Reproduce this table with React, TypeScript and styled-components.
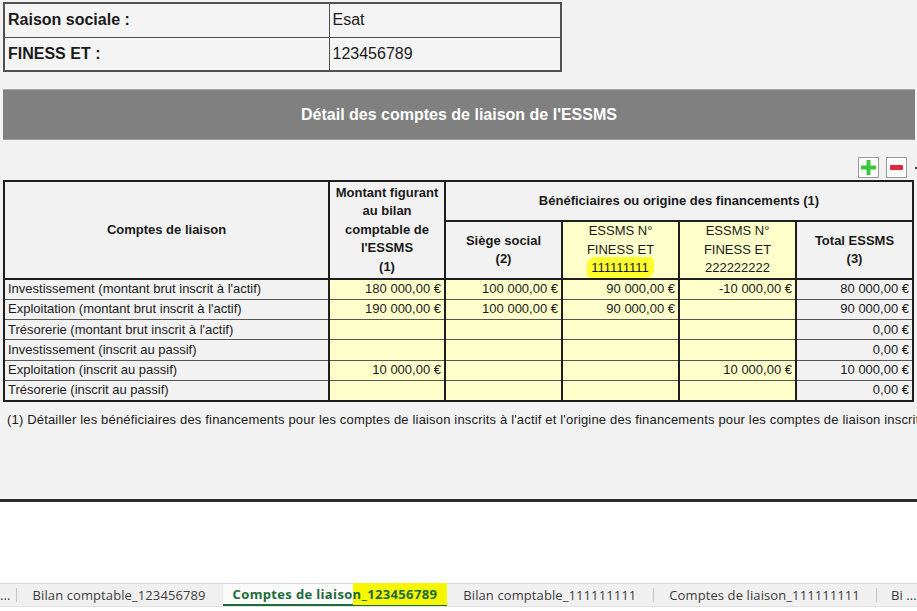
import React from "react";
import styled, { createGlobalStyle } from "styled-components";

const Global = createGlobalStyle`
  html, body { margin: 0; padding: 0; background: #ffffff; }
  body { font-family: "Liberation Sans", Arial, sans-serif; color: #1a1a1a; }
  * { box-sizing: border-box; }
`;

const Page = styled.div`
  width: 917px;
  height: 611px;
  overflow: hidden;
  display: flex;
  flex-direction: column;
  background: #ffffff;
`;

const Sheet = styled.div`
  height: 499px;
  background: #f2f2f2;
  padding: 2px 0 0 3px;
  display: flex;
  flex-direction: column;
  overflow: hidden;
`;

const InfoTable = styled.table`
  width: 559px;
  border-collapse: collapse;
  table-layout: fixed;
  border: 2px solid #505050;
`;

const InfoCell = styled.td<{ $bold?: boolean; $w?: number }>`
  height: 34px;
  border: 1px solid #505050;
  padding: 0 3px;
  font-size: 16px;
  font-weight: ${(p) => (p.$bold ? 700 : 400)};
  background: #f4f4f4;
  width: ${(p) => (p.$w ? `${p.$w}px` : "auto")};
  white-space: nowrap;
`;

const TitleBar = styled.div`
  margin-top: 17px;
  width: 912px;
  height: 51px;
  background: #808080;
  border-top: 1px solid #a8a8a8;
  border-bottom: 1px solid #9a9a9a;
  color: #ffffff;
  font-weight: 700;
  font-size: 16px;
  display: flex;
  align-items: center;
  justify-content: center;
`;

const Toolbar = styled.div`
  height: 40px;
  display: flex;
  justify-content: flex-end;
  align-items: flex-start;
  padding-top: 17px;
  gap: 7px;
`;

const IconButton = styled.div`
  width: 21px;
  height: 21px;
  background: #ffffff;
  border: 1px solid #9a9a9a;
  display: flex;
  align-items: center;
  justify-content: center;
`;

const Dot = styled.span`
  width: 2px;
  height: 2px;
  background: #333;
  margin: 10px 0 0 1px;
`;

const MainTable = styled.table`
  width: 909px;
  border-collapse: collapse;
  table-layout: fixed;
  border: 2px solid #1e1e1e;
  font-size: 13px;
`;

const HeadCell = styled.th<{ $yellow?: boolean; $regular?: boolean }>`
  border: 2px solid #1e1e1e;
  background: ${(p) => (p.$yellow ? "#ffffcc" : "#f2f2f2")};
  font-weight: ${(p) => (p.$regular ? 400 : 700)};
  font-size: 13px;
  line-height: 18.5px;
  text-align: center;
  vertical-align: middle;
  padding: 0 2px;
  color: #1a1a1a;
`;

const HeadRow = styled.tr<{ $h: number }>`
  height: ${(p) => p.$h}px;
`;

const DataRow = styled.tr`
  height: 20.3px;
`;

const DataCell = styled.td<{ $yellow?: boolean; $label?: boolean }>`
  border-left: 2px solid #1e1e1e;
  border-right: 2px solid #1e1e1e;
  border-top: 1px solid #555555;
  border-bottom: 1px solid #555555;
  background: ${(p) => (p.$yellow ? "#ffffcc" : "#f2f2f2")};
  text-align: ${(p) => (p.$label ? "left" : "right")};
  padding: 0 3px;
  font-size: 13px;
  white-space: nowrap;
  overflow: hidden;
  line-height: 18px;
  color: #1a1a1a;
`;

const Marker = styled.span`
  background: #ffff2e;
  border-radius: 8px 4px 8px 4px;
  padding: 3px 5px 3px 4px;
`;

const Footnote = styled.div`
  margin-top: 10px;
  padding-left: 4px;
  font-size: 13px;
  letter-spacing: 0.17px;
  white-space: nowrap;
  overflow: hidden;
  color: #1a1a1a;
`;

const Rule = styled.div`
  height: 3px;
  background: #2a2a2a;
`;

const Blank = styled.div`
  height: 81px;
  background: #ffffff;
`;

const TabBar = styled.div`
  height: 24px;
  background: #f0f0f0;
  border-top: 1px solid #d6d6d6;
  border-bottom: 1px solid #e2e2e2;
  display: flex;
  align-items: stretch;
  font-family: "Open Sans", "Noto Sans", sans-serif;
  font-size: 13px;
  color: #3c3c3c;
  white-space: nowrap;
`;

const Tab = styled.div<{ $pl: number; $pr: number }>`
  display: flex;
  align-items: center;
  padding: 0 ${(p) => p.$pr}px 0 ${(p) => p.$pl}px;
  letter-spacing: 0.1px;
`;

const ActiveTab = styled.div`
  display: flex;
  align-items: center;
  padding: 0 10px;
  background: #fafafa;
  border-bottom: 2px solid #1d6b3b;
  color: #1d6b3b;
  font-weight: 700;
  letter-spacing: 0.35px;
`;

const TabMark = styled.span`
  background: #f6f600;
  padding: 2px 10px 2px 0;
  margin-right: -10px;
`;

const Sep = styled.div`
  width: 1px;
  background: #c4c4c4;
  margin: 4px 0;
`;

const rows: string[][] = [
  ["Investissement (montant brut inscrit à l'actif)", "180 000,00 €", "100 000,00 €", "90 000,00 €", "-10 000,00 €", "80 000,00 €"],
  ["Exploitation (montant brut inscrit à l'actif)", "190 000,00 €", "100 000,00 €", "90 000,00 €", "", "90 000,00 €"],
  ["Trésorerie (montant brut inscrit à l'actif)", "", "", "", "", "0,00 €"],
  ["Investissement (inscrit au passif)", "", "", "", "", "0,00 €"],
  ["Exploitation (inscrit au passif)", "10 000,00 €", "", "", "10 000,00 €", "10 000,00 €"],
  ["Trésorerie (inscrit au passif)", "", "", "", "", "0,00 €"],
];

const PlusIcon = () => (
  <svg width="15" height="15" viewBox="0 0 15 15">
    <rect x="5.5" y="0" width="4" height="15" fill="#3cc83c" />
    <rect x="0" y="5.5" width="15" height="4" fill="#3cc83c" />
  </svg>
);

const MinusIcon = () => (
  <svg width="13" height="5" viewBox="0 0 13 5">
    <rect x="0" y="0" width="13" height="5" rx="1" fill="#e3263b" />
  </svg>
);

export default function App() {
  return (
    <Page>
      <Global />
      <Sheet>
        <InfoTable>
          <tbody>
            <tr>
              <InfoCell $bold $w={325}>Raison sociale :</InfoCell>
              <InfoCell>Esat</InfoCell>
            </tr>
            <tr>
              <InfoCell $bold $w={325}>FINESS ET :</InfoCell>
              <InfoCell>123456789</InfoCell>
            </tr>
          </tbody>
        </InfoTable>

        <TitleBar>Détail des comptes de liaison de l'ESSMS</TitleBar>

        <Toolbar>
          <IconButton>
            <PlusIcon />
          </IconButton>
          <IconButton>
            <MinusIcon />
          </IconButton>
          <Dot />
        </Toolbar>

        <MainTable>
          <colgroup>
            <col style={{ width: 325 }} />
            <col style={{ width: 116 }} />
            <col style={{ width: 117 }} />
            <col style={{ width: 117 }} />
            <col style={{ width: 117 }} />
            <col style={{ width: 117 }} />
          </colgroup>
          <thead>
            <HeadRow $h={40}>
              <HeadCell rowSpan={2}>Comptes de liaison</HeadCell>
              <HeadCell rowSpan={2}>
                Montant figurant
                <br />
                au bilan
                <br />
                comptable de
                <br />
                l'ESSMS
                <br />
                (1)
              </HeadCell>
              <HeadCell colSpan={4}>Bénéficiaires ou origine des financements (1)</HeadCell>
            </HeadRow>
            <HeadRow $h={58}>
              <HeadCell>
                Siège social
                <br />
                (2)
              </HeadCell>
              <HeadCell $yellow $regular>
                ESSMS N°
                <br />
                FINESS ET
                <br />
                <Marker>111111111</Marker>
              </HeadCell>
              <HeadCell $yellow $regular>
                ESSMS N°
                <br />
                FINESS ET
                <br />
                222222222
              </HeadCell>
              <HeadCell>
                Total ESSMS
                <br />
                (3)
              </HeadCell>
            </HeadRow>
          </thead>
          <tbody>
            {rows.map((r, i) => (
              <DataRow key={i}>
                <DataCell $label>{r[0]}</DataCell>
                <DataCell $yellow>{r[1]}</DataCell>
                <DataCell $yellow>{r[2]}</DataCell>
                <DataCell $yellow>{r[3]}</DataCell>
                <DataCell $yellow>{r[4]}</DataCell>
                <DataCell>{r[5]}</DataCell>
              </DataRow>
            ))}
          </tbody>
        </MainTable>

        <Footnote>
          (1) Détailler les bénéficiaires des financements pour les comptes de liaison inscrits à l'actif et l'origine des financements pour les comptes de liaison inscrits au passif
        </Footnote>
      </Sheet>
      <Rule />
      <Blank />
      <TabBar>
        <Tab $pl={0} $pr={5}>...</Tab>
        <Sep />
        <Tab $pl={16} $pr={17}>Bilan comptable_123456789</Tab>
        <ActiveTab>
          Comptes de liaiso<TabMark>n_123456789</TabMark>
        </ActiveTab>
        <Tab $pl={16} $pr={17}>Bilan comptable_111111111</Tab>
        <Sep />
        <Tab $pl={15} $pr={16}>Comptes de liaison_111111111</Tab>
        <Sep />
        <Tab $pl={14} $pr={0}>Bi ...</Tab>
      </TabBar>
    </Page>
  );
}
